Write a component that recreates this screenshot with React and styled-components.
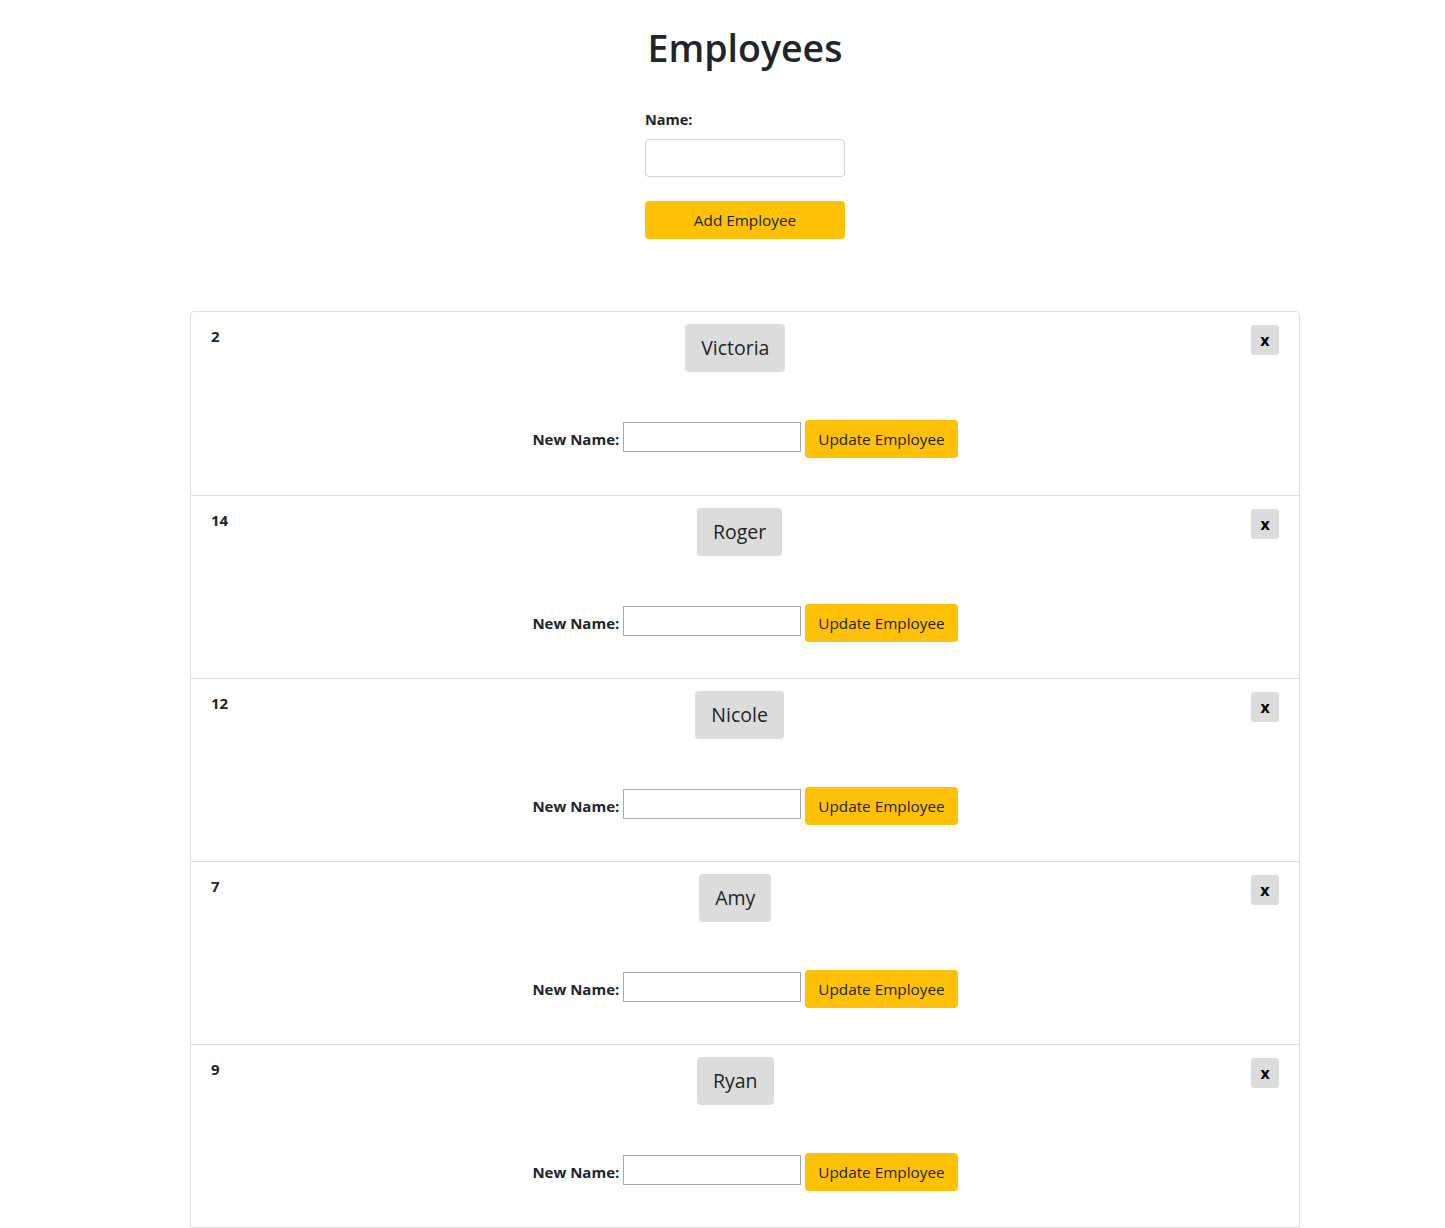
import React, { useState } from 'react';
import styled, { createGlobalStyle } from 'styled-components';

const GlobalStyle = createGlobalStyle`
  body {
    margin: 0;
    background: #fff;
    color: #212529;
    font-family: "Open Sans", "Liberation Sans", sans-serif;
    font-size: 16px;
  }
  * { box-sizing: border-box; }
`;

const Page = styled.div`
  padding: 20px 145px 0 190px;
`;

const Title = styled.h1`
  margin: 0;
  text-align: center;
  font-size: 37.5px;
  font-weight: 600;
  line-height: 56px;
`;

const AddForm = styled.form`
  width: 200px;
  margin: 33px auto 0;
  display: flex;
  flex-direction: column;
`;

const Label = styled.label`
  font-weight: 700;
  font-size: 14.5px;
  line-height: 22px;
  margin-bottom: 8px;
`;

const TextInput = styled.input`
  height: 38px;
  border: 1px solid #ced4da;
  border-radius: 4px;
  padding: 6px 12px;
  font: inherit;
`;

const YellowButton = styled.button`
  height: 38px;
  background: #ffc107;
  color: #212529;
  border: none;
  border-radius: 4px;
  padding: 0 13px;
  font-family: inherit;
  font-size: 15.3px;
  cursor: pointer;
  margin-top: ${({ $top }) => $top || 0}px;
`;

const List = styled.ul`
  list-style: none;
  margin: 72px 0 0;
  padding: 0;
  border: 1px solid #dfdfdf;
  border-radius: 4px 4px 0 0;
`;

const Item = styled.li`
  padding: 12px 20px 36px;
  height: 183px;
  & + & {
    border-top: 1px solid #dfdfdf;
  }
`;

const TopRow = styled.div`
  display: flex;
  justify-content: space-between;
  align-items: flex-start;
`;

const Id = styled.span`
  font-weight: 700;
  font-size: 15px;
  line-height: 24px;
`;

const NameTag = styled.div`
  background: #dcdcdc;
  border-radius: 4px;
  font-size: 19.5px;
  line-height: 48px;
  height: 48px;
  padding: 0 16px;
`;

const RemoveButton = styled.button`
  width: 28px;
  height: 30px;
  margin-top: 1px;
  background: #dcdcdc;
  border: none;
  border-radius: 3px;
  font-family: inherit;
  font-weight: 700;
  font-size: 16px;
  line-height: 28px;
  color: #000;
  padding: 0;
  cursor: pointer;
`;

const UpdateRow = styled.div`
  margin-top: 48px;
  display: flex;
  justify-content: center;
  align-items: center;
  gap: 4px;
`;

const SmallLabel = styled.label`
  font-weight: 700;
  font-size: 15px;
`;

const SmallInput = styled.input`
  width: 178px;
  height: 30px;
  margin-top: -4px;
  border: 1px solid #a9a9a9;
  border-radius: 0;
  font: inherit;
`;

const employees = [
  { id: 2, name: 'Victoria' },
  { id: 14, name: 'Roger' },
  { id: 12, name: 'Nicole' },
  { id: 7, name: 'Amy' },
  { id: 9, name: 'Ryan' },
];

export default function App() {
  const [list] = useState(employees);
  return (
    <Page>
      <GlobalStyle />
      <Title>Employees</Title>
      <AddForm onSubmit={(e) => e.preventDefault()}>
        <Label>Name:</Label>
        <TextInput type="text" />
        <YellowButton $top={24}>Add Employee</YellowButton>
      </AddForm>
      <List>
        {list.map((emp) => (
          <Item key={emp.id}>
            <TopRow>
              <Id>{emp.id}</Id>
              <NameTag>{emp.name}</NameTag>
              <RemoveButton>x</RemoveButton>
            </TopRow>
            <UpdateRow>
              <SmallLabel>New Name:</SmallLabel>
              <SmallInput type="text" />
              <YellowButton>Update Employee</YellowButton>
            </UpdateRow>
          </Item>
        ))}
      </List>
    </Page>
  );
}
